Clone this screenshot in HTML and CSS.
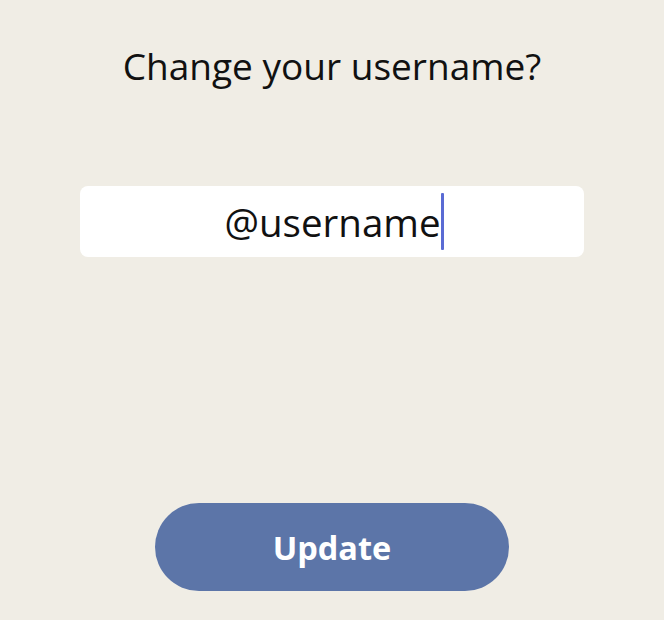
FILE: index.html
```html
<!DOCTYPE html>
<html lang="en">
<head>
  <meta charset="UTF-8">
  <title>Change username</title>
  <link rel="stylesheet" href="styles.css">
</head>
<body>
<div class="screen">
  <h1 class="title">Change your username?</h1>
  <div class="field">
    <span class="value">@username</span><span class="caret"></span>
  </div>
  <button class="update">Update</button>
</div>
</body>
</html>
```

FILE: styles.css
```css
* {
  box-sizing: border-box;
}
body {
  margin: 0;
  background: #f0ede5;
  font-family: "Open Sans", "Noto Sans", sans-serif;
}
.screen {
  height: 620px;
  display: flex;
  flex-direction: column;
  align-items: center;
}
.title {
  margin: 42px 0 0;
  font-size: 37px;
  font-weight: 400;
  line-height: 48px;
  color: #111;
}
.field {
  margin-top: 96px;
  width: 504px;
  height: 71px;
  background: #fff;
  border-radius: 8px;
  display: flex;
  align-items: center;
  justify-content: center;
  padding-left: 4px;
}
.value {
  font-size: 38.5px;
  color: #111;
  line-height: 40px;
}
.caret {
  width: 3px;
  height: 57px;
  background: #5a6bd4;
  border-radius: 1px;
  margin-left: 0;
}
.update {
  margin-top: 246px;
  width: 354px;
  height: 88px;
  border: 0;
  border-radius: 44px;
  background: #5c75a8;
  color: #fff;
  font-family: inherit;
  font-size: 32.5px;
  font-weight: 700;
}
```
